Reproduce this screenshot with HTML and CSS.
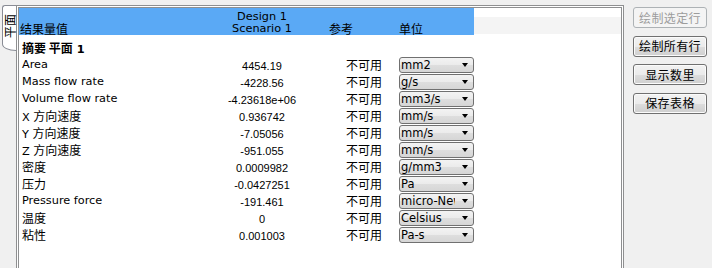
FILE: index.html
```html
<!DOCTYPE html>
<html lang="zh">
<head>
  <meta charset="UTF-8" />
  <title>结果量值</title>
  <link rel="stylesheet" href="styles.css">
</head>
<body>
  <div class="app">
    <div class="side-tab"><span>平面</span></div>

    <div class="frame">
      <div class="grid head">
        <div class="hc name cn">结果量值</div>
        <div class="hc design">Design 1<br>Scenario 1</div>
        <div class="hc ref cn">参考</div>
        <div class="hc unit cn">单位</div>
        <div class="hc filler"></div>
      </div>

      <div class="summary"><span class="cn">摘要 平面</span> 1</div>

      <div class="grid row">
        <div class="label">Area</div>
        <div class="value">4454.19</div>
        <div class="ref cn">不可用</div>
        <div class="combo"><span>mm2</span><i></i></div>
      </div>
      <div class="grid row">
        <div class="label">Mass flow rate</div>
        <div class="value">-4228.56</div>
        <div class="ref cn">不可用</div>
        <div class="combo"><span>g/s</span><i></i></div>
      </div>
      <div class="grid row">
        <div class="label">Volume flow rate</div>
        <div class="value">-4.23618e+06</div>
        <div class="ref cn">不可用</div>
        <div class="combo"><span>mm3/s</span><i></i></div>
      </div>
      <div class="grid row">
        <div class="label">X <span class="cn">方向速度</span></div>
        <div class="value">0.936742</div>
        <div class="ref cn">不可用</div>
        <div class="combo"><span>mm/s</span><i></i></div>
      </div>
      <div class="grid row">
        <div class="label">Y <span class="cn">方向速度</span></div>
        <div class="value">-7.05056</div>
        <div class="ref cn">不可用</div>
        <div class="combo"><span>mm/s</span><i></i></div>
      </div>
      <div class="grid row">
        <div class="label">Z <span class="cn">方向速度</span></div>
        <div class="value">-951.055</div>
        <div class="ref cn">不可用</div>
        <div class="combo"><span>mm/s</span><i></i></div>
      </div>
      <div class="grid row">
        <div class="label cn">密度</div>
        <div class="value">0.0009982</div>
        <div class="ref cn">不可用</div>
        <div class="combo"><span>g/mm3</span><i></i></div>
      </div>
      <div class="grid row">
        <div class="label cn">压力</div>
        <div class="value">-0.0427251</div>
        <div class="ref cn">不可用</div>
        <div class="combo"><span>Pa</span><i></i></div>
      </div>
      <div class="grid row">
        <div class="label">Pressure force</div>
        <div class="value">-191.461</div>
        <div class="ref cn">不可用</div>
        <div class="combo"><span>micro-Newton</span><i></i></div>
      </div>
      <div class="grid row">
        <div class="label cn">温度</div>
        <div class="value">0</div>
        <div class="ref cn">不可用</div>
        <div class="combo"><span>Celsius</span><i></i></div>
      </div>
      <div class="grid row">
        <div class="label cn">粘性</div>
        <div class="value">0.001003</div>
        <div class="ref cn">不可用</div>
        <div class="combo"><span>Pa-s</span><i></i></div>
      </div>
    </div>

    <div class="actions">
      <button class="btn" disabled>绘制选定行</button>
      <button class="btn">绘制所有行</button>
      <button class="btn">显示数里</button>
      <button class="btn">保存表格</button>
    </div>
  </div>
</body>
</html>
```

FILE: styles.css
```css
:root {
  --bg: #f0f0f0;
  --frame: #8e8f90;
  --select: #5aa9f5;
  --btn-border: #707070;
  --muted: #9c9c9c;
}
html, body {
  margin: 0;
  padding: 0;
  background: var(--bg);
  color: #000;
  font-family: 'DejaVu Sans', 'Noto Sans CJK SC', sans-serif;
  font-size: 11.3px;
}
.cn {
  font-family: 'Noto Sans CJK SC', sans-serif;
  font-size: 12px;
}
.app {
  display: flex;
  align-items: flex-start;
  height: 268px;
  overflow: hidden;
}

/* vertical tab on the left */
.side-tab {
  box-sizing: border-box;
  width: 14px;
  height: 46px;
  margin: 5px 0 0 2px;
  padding-top: 8px;
  border: 1px solid #898c95;
  border-right: 0;
  border-radius: 3px 0 0 14px / 3px 0 0 7px;
  background: #fff;
  display: flex;
  align-items: flex-start;
  justify-content: center;
}
.side-tab span {
  font-family: 'Noto Sans CJK SC', sans-serif;
  font-size: 12px;
  line-height: 12px;
  writing-mode: vertical-rl;
  text-orientation: sideways;
  transform: rotate(180deg);
}

/* table frame */
.frame {
  box-sizing: border-box;
  width: 608px;
  height: 275px;
  margin-top: 5px;
  border: 3px double var(--frame);
  border-bottom: 0;
  background: #fff;
}
.grid {
  display: grid;
  grid-template-columns: 207px 72px 101px 75px 1fr;
}
.head {
  height: 27px;
  align-items: end;
}
.hc {
  height: 27px;
  box-sizing: border-box;
  background: var(--select);
  display: flex;
  align-items: flex-end;
}
.hc.name { padding-left: 1px; line-height: 13px; }
.hc.design {
  justify-content: center;
  text-align: center;
  line-height: 12px;
}
.hc.ref { padding-left: 31px; line-height: 13px; }
.hc.unit { padding-left: 0; line-height: 13px; }
.hc.filler {
  background: linear-gradient(#fff 0 9px, #f4f4f4 9px 26px, #fff 26px);
}

.summary {
  height: 21px;
  box-sizing: border-box;
  padding: 4px 0 0 3px;
  line-height: 17px;
  font-weight: 700;
}
.row {
  height: 17px;
  align-items: center;
}
.label {
  padding-left: 3px;
  white-space: nowrap;
}
.value {
  font-family: 'Liberation Sans', sans-serif;
  font-size: 11px;
  text-align: center;
  padding-top: 2px;
}
.row .ref {
  padding-left: 48px;
}
.combo {
  box-sizing: border-box;
  height: 16px;
  border: 1px solid var(--btn-border);
  border-radius: 3px;
  background: linear-gradient(#f3f3f3, #ebebeb 50%, #dedede 51%, #d6d6d6);
  display: flex;
  align-items: center;
  font-size: 11.5px;
}
.combo span {
  width: 54px;
  padding-left: 1px;
  overflow: hidden;
  white-space: nowrap;
  line-height: 14px;
}
.combo i {
  width: 0;
  height: 0;
  margin-left: 7px;
  border-left: 3.5px solid transparent;
  border-right: 3.5px solid transparent;
  border-top: 4px solid #000;
}

/* buttons on the right */
.actions {
  width: 74px;
  margin-left: 9px;
  padding-top: 7px;
  display: flex;
  flex-direction: column;
  gap: 7.5px;
}
.btn {
  box-sizing: border-box;
  height: 21px;
  padding: 0;
  border: 1px solid var(--btn-border);
  border-radius: 3px;
  background: linear-gradient(#f2f2f2, #ebebeb 50%, #dddddd 51%, #cfcfcf);
  box-shadow: inset 0 0 0 1px #fbfbfb;
  font-family: 'Noto Sans CJK SC', sans-serif;
  font-size: 12px;
  letter-spacing: 0.4px;
  line-height: 18px;
  color: #000;
}
.btn:disabled {
  border-color: #adb2b5;
  background: #f4f4f4;
  box-shadow: none;
  color: var(--muted);
}
```
